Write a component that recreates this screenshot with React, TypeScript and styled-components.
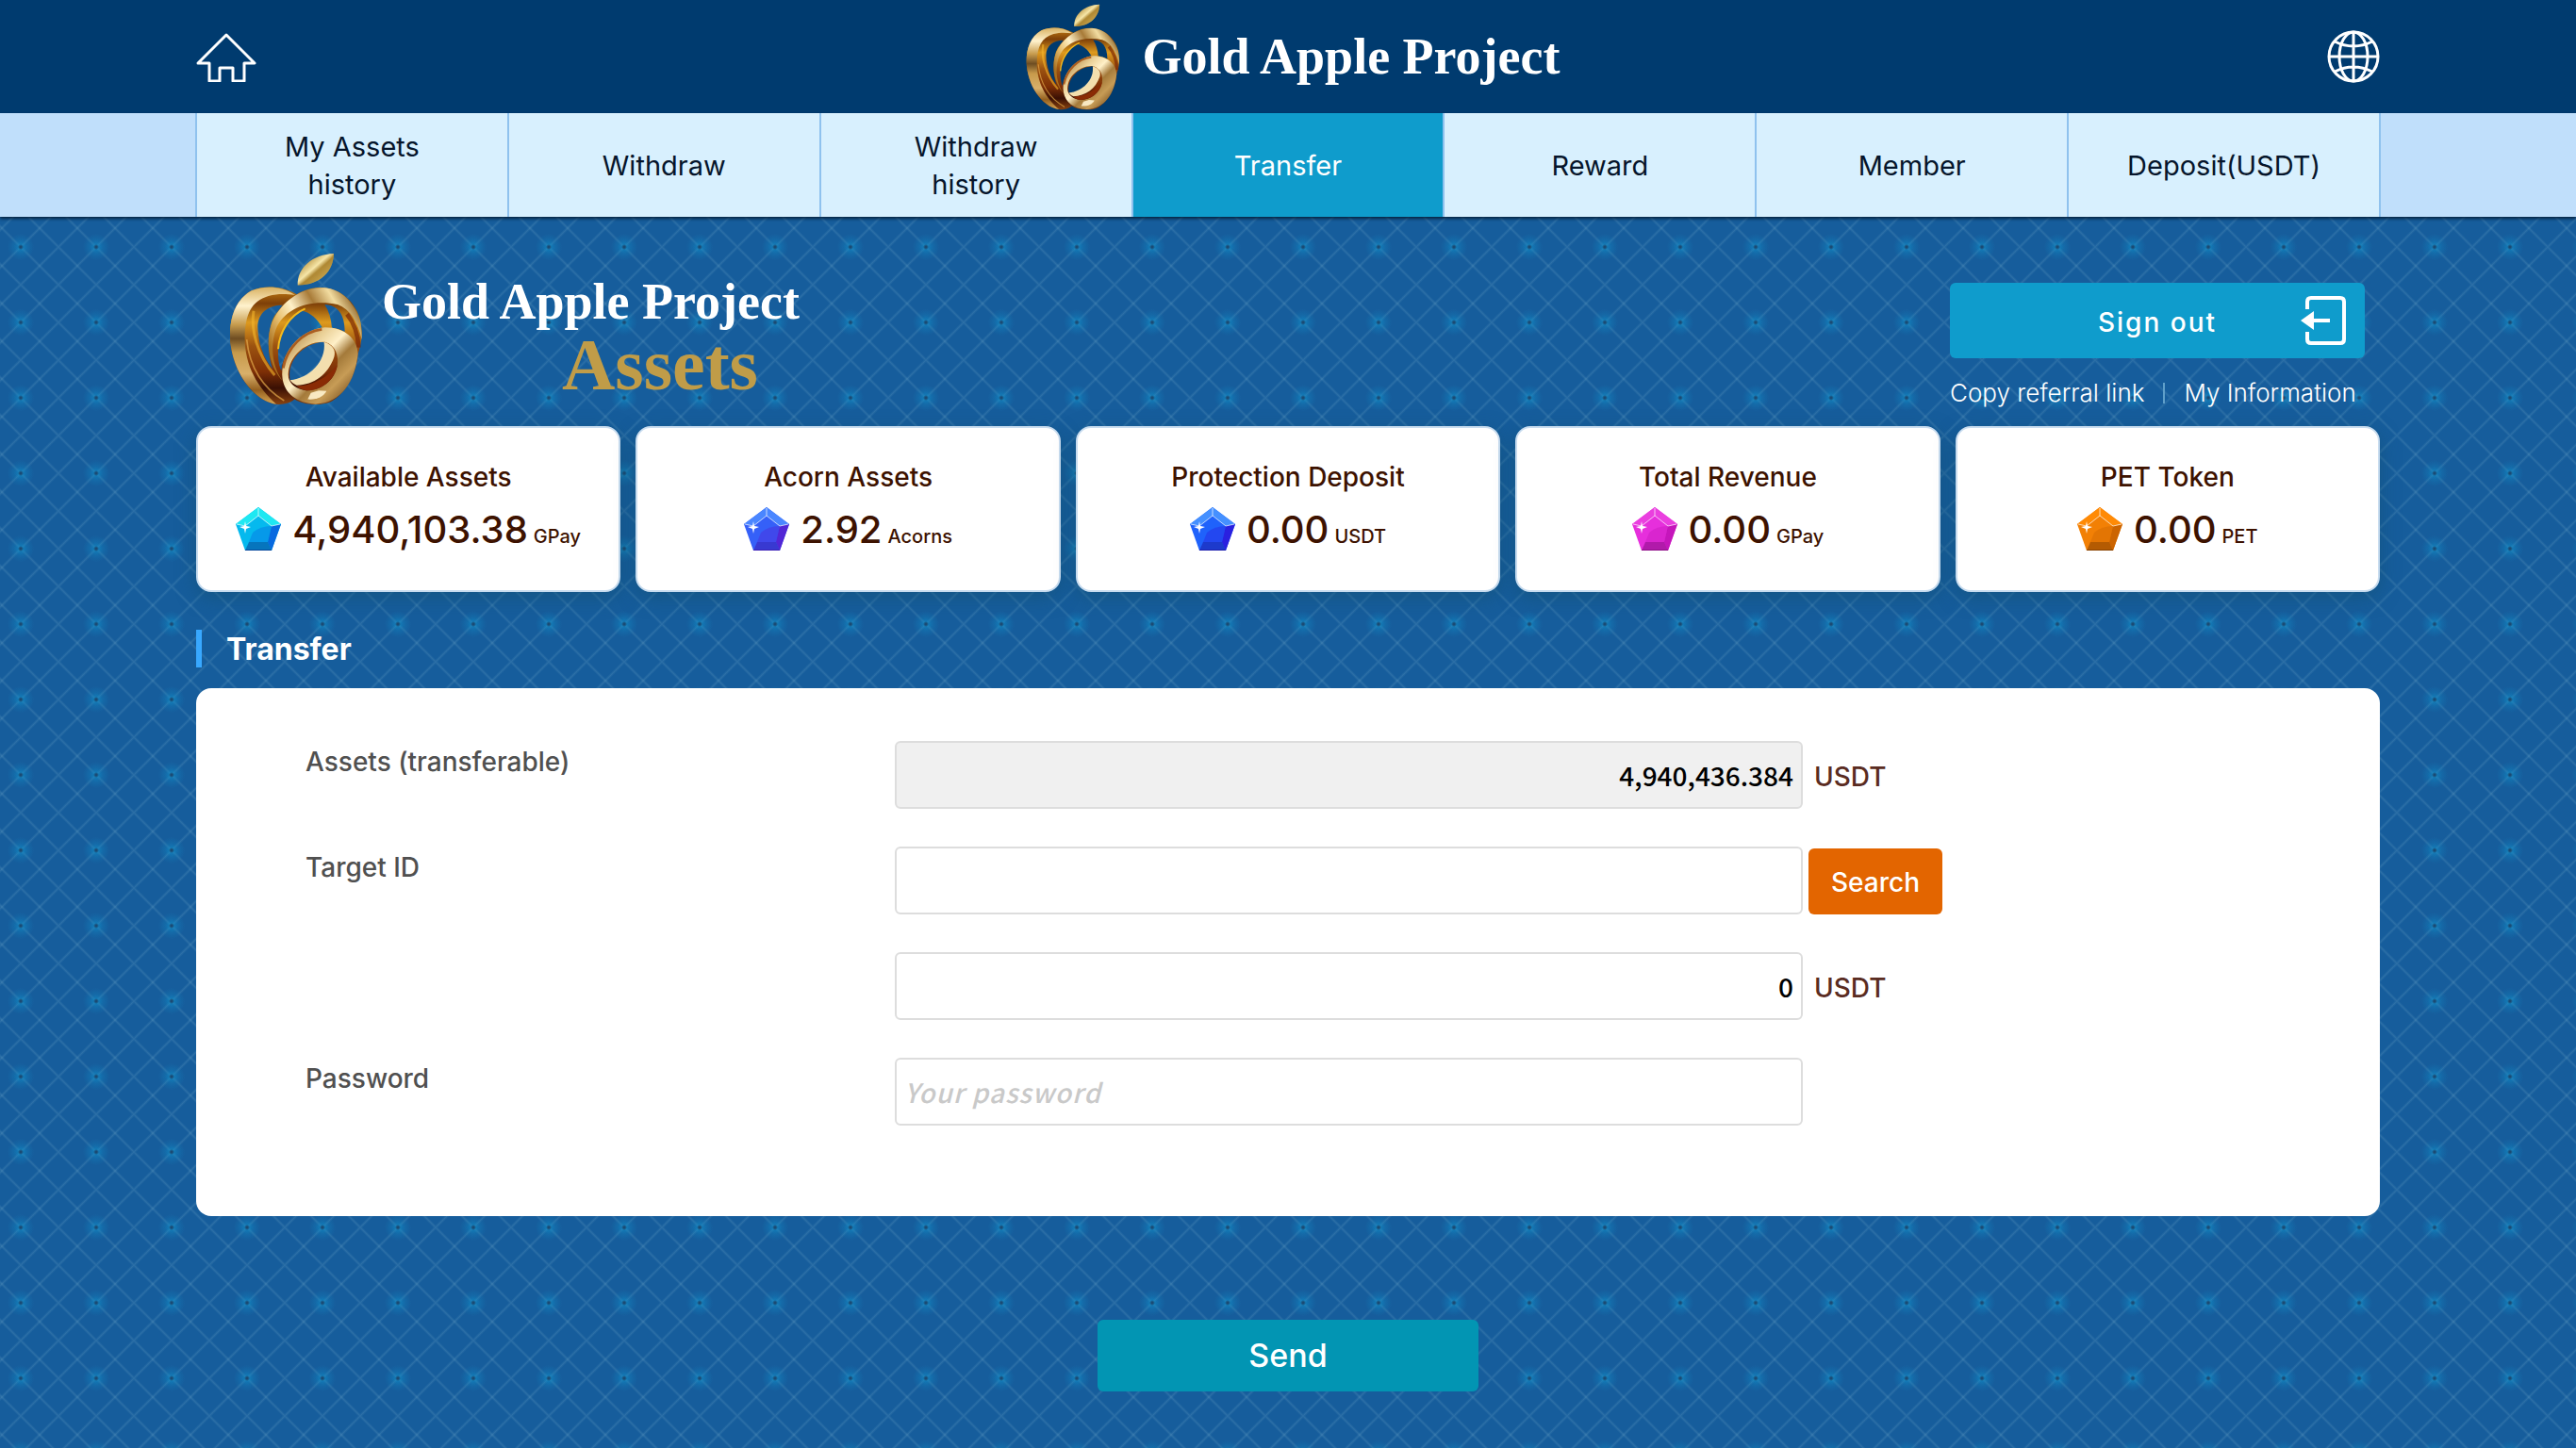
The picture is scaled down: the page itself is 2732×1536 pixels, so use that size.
import React, { useState } from 'react';
import styled, { createGlobalStyle } from 'styled-components';

const sans = `Inter, "Noto Sans", "Liberation Sans", sans-serif`;
const fieldFont = `"Noto Sans CJK KR", "Noto Sans", sans-serif`;
const serif = `"Liberation Serif", "Times New Roman", serif`;

const GlobalStyle = createGlobalStyle`
  *, *::before, *::after { box-sizing: border-box; }
  body { margin: 0; font-family: ${sans}; font-size: 28px; line-height: 40px; }
  button, input { font: inherit; }
  a { color: inherit; text-decoration: none; }
  h1, h2, h3, p, ul { margin: 0; padding: 0; }
`;

const Page = styled.div`
  min-height: 100vh;
  background-color: #165d9c;
  background-image:
    radial-gradient(circle, #1b4a73 1px, rgba(27, 74, 115, 0) 3px),
    radial-gradient(circle, rgba(16, 146, 204, 0.7), rgba(16, 146, 204, 0.25) 7px, rgba(16, 146, 204, 0) 14px),
    linear-gradient(45deg, transparent calc(50% - 2px), rgba(150, 200, 220, 0.16) 50%, transparent calc(50% + 2px)),
    linear-gradient(135deg, transparent calc(50% - 2px), rgba(150, 200, 220, 0.16) 50%, transparent calc(50% + 2px));
  background-size: 80px 80px, 80px 80px, 40px 40px, 40px 40px;
  background-position: 62px 62px, 62px 62px, 22px 22px, 22px 22px;
`;

const Header = styled.header`
  height: 120px;
  padding: 0 208px;
  background: #003b6f;
  display: grid;
  grid-template-columns: 1fr auto 1fr;
  align-items: center;
`;

const IconButton = styled.button<{ $end?: boolean }>`
  display: flex;
  justify-self: ${(p) => (p.$end ? 'end' : 'start')};
  padding: 0;
  border: 0;
  background: none;
  color: #fff;
  cursor: pointer;
`;

const Brand = styled.a`
  display: flex;
  align-items: center;
  gap: 24px;
  padding-left: 10px;
`;

const BrandName = styled.span`
  font: bold 54px/64px ${serif};
  color: #fff;
`;

const NavBar = styled.nav`
  position: relative;
  padding: 0 207px;
  background: #c0dffb;
  box-shadow: 0 2px 3px rgba(0, 20, 40, 0.8);
`;

const Tabs = styled.ul`
  display: grid;
  grid-template-columns: repeat(7, minmax(0, 1fr));
  list-style: none;
  border-left: 2px solid #8fc2ee;
`;

const TabLink = styled.a<{ $active?: boolean }>`
  height: 110px;
  padding: 2px 56px 0;
  display: flex;
  align-items: center;
  justify-content: center;
  text-align: center;
  font-size: 29px;
  border-right: 2px solid #8fc2ee;
  background: ${(p) => (p.$active ? '#0f9ccc' : '#d8f0fe')};
  color: ${(p) => (p.$active ? '#fff' : '#06152b')};
`;

const Main = styled.main`
  padding: 36px 208px 60px;
`;

const Intro = styled.div`
  display: flex;
  justify-content: space-between;
  align-items: flex-start;
  padding: 0 16px 0 35px;
  height: 186px;
`;

const AssetsBrand = styled.h1`
  display: flex;
  gap: 20px;
  padding-top: 2px;
  font-weight: bold;
`;

const AssetsText = styled.span`
  display: flex;
  flex-direction: column;
  padding-top: 20px;
`;

const AssetsWord = styled.span`
  font: bold 78px/70px ${serif};
  color: #c09c48;
  align-self: flex-end;
  padding-right: 44px;
`;

const Account = styled.div`
  width: 440px;
  padding-top: 34px;
`;

const SignOut = styled.button`
  width: 100%;
  height: 80px;
  padding: 0 20px;
  display: grid;
  grid-template-columns: 48px 1fr 48px;
  align-items: center;
  border: 0;
  border-radius: 6px;
  background: #0f9ccc;
  color: #fff;
  font-weight: 500;
  letter-spacing: 2px;
  cursor: pointer;
  span { grid-column: 2; padding-top: 4px; }
`;

const AccountLinks = styled.div`
  display: flex;
  align-items: center;
  padding-top: 18px;
  font-size: 26px;
  line-height: 38px;
  font-weight: 300;
  color: #fff;
  white-space: nowrap;
`;

const Divider = styled.span`
  width: 2px;
  height: 22px;
  margin: 0 20px;
  background: #5f9fca;
`;

const Cards = styled.section`
  display: grid;
  grid-template-columns: repeat(5, 1fr);
  gap: 16px;
`;

const Card = styled.article`
  height: 176px;
  padding-top: 32px;
  border: 2px solid #c8dcef;
  border-radius: 16px;
  background: #fff;
  box-shadow: 0 6px 20px rgba(20, 80, 110, 0.5);
  color: #3d1200;
  text-align: center;
`;

const CardTitle = styled.h3`
  font-size: 28px;
  line-height: 40px;
  font-weight: 500;
`;

const Amount = styled.p`
  display: flex;
  justify-content: center;
  align-items: baseline;
  font-size: 40px;
  line-height: 56px;
  font-weight: 500;
  padding-top: 8px;
  svg { align-self: flex-start; margin: 4px 12px 0 0; }
  small { font-size: 20px; margin-left: 6px; }
`;

const SectionTitle = styled.h2`
  margin: 40px 0 22px;
  padding: 2px 0 0 26px;
  border-left: 6px solid #38a8ff;
  font-size: 32px;
  line-height: 38px;
  font-weight: 700;
  color: #fff;
`;

const Panel = styled.div`
  padding: 56px 116px 96px;
  border-radius: 16px;
  background: #fff;
  display: grid;
  gap: 40px;
`;

const Row = styled.div`
  display: grid;
  grid-template-columns: 30% 1fr;
`;

const Label = styled.label`
  padding-top: 2px;
  color: #505050;
  font-weight: 500;
`;

const Controls = styled.div`
  display: flex;
  align-items: center;
  gap: 6px;
`;

const Field = styled.input<{ $right?: boolean }>`
  width: 66%;
  height: 72px;
  padding: 0 8px;
  border: 2px solid #ddd;
  border-radius: 6px;
  background: #fff;
  color: #000;
  font-family: ${fieldFont};
  font-weight: 500;
  text-align: ${(p) => (p.$right ? 'right' : 'left')};
  &:read-only { background: #f0f0f0; }
  &::placeholder { color: #c9c9c9; font-style: italic; letter-spacing: 1px; opacity: 1; }
`;

const Unit = styled.span`
  padding: 4px 0 0 6px;
  color: #5a2c22;
  font-weight: 500;
`;

const Search = styled.button`
  align-self: flex-end;
  height: 70px;
  padding: 2px 24px 0;
  border: 0;
  border-radius: 6px;
  background: #e36500;
  color: #fff;
  font-weight: 500;
  cursor: pointer;
`;

const Send = styled.button`
  display: block;
  width: 404px;
  height: 76px;
  margin: 110px auto 0;
  border: 0;
  border-radius: 6px;
  background: #0295b3;
  color: #fff;
  font-size: 34px;
  font-weight: 500;
  cursor: pointer;
`;

function Apple({ id, width, height }: { id: string; width: number; height: number }) {
  const ref = (name: string) => `url(#${id}-${name})`;
  return (
    <svg width={width} height={height} viewBox="40 27 426 480" preserveAspectRatio="none" aria-hidden="true">
      <defs>
        <linearGradient id={`${id}-leaf`} x1="0" y1="0" x2="1" y2="1">
          <stop offset="0.2" stopColor="#b8923e" />
          <stop offset="0.45" stopColor="#f6e6a8" />
          <stop offset="0.55" stopColor="#b08a35" />
          <stop offset="0.8" stopColor="#e3c266" />
        </linearGradient>
        <linearGradient id={`${id}-left`} x1="0" y1="0" x2="0" y2="1">
          <stop offset="0" stopColor="#d9b263" />
          <stop offset="0.16" stopColor="#fff2cd" />
          <stop offset="0.32" stopColor="#c79c4e" />
          <stop offset="0.44" stopColor="#6e4d22" />
          <stop offset="0.56" stopColor="#c79a4b" />
          <stop offset="0.74" stopColor="#d9b06a" />
          <stop offset="0.88" stopColor="#94601f" />
          <stop offset="1" stopColor="#d8a552" />
        </linearGradient>
        <linearGradient id={`${id}-right`} x1="0" y1="0.6" x2="1" y2="0">
          <stop offset="0" stopColor="#a8701f" />
          <stop offset="0.2" stopColor="#e8c070" />
          <stop offset="0.36" stopColor="#fff1c8" />
          <stop offset="0.55" stopColor="#a87b38" />
          <stop offset="0.72" stopColor="#f2dca0" />
          <stop offset="0.88" stopColor="#8f6529" />
          <stop offset="1" stopColor="#c99d50" />
        </linearGradient>
        <linearGradient id={`${id}-deep`} x1="0" y1="0" x2="0" y2="1">
          <stop offset="0" stopColor="#c98214" />
          <stop offset="0.14" stopColor="#7d3f08" />
          <stop offset="0.3" stopColor="#dd9a1e" />
          <stop offset="0.5" stopColor="#9c5310" />
          <stop offset="0.72" stopColor="#7e2f06" />
          <stop offset="0.86" stopColor="#3a1004" />
          <stop offset="1" stopColor="#8a4310" />
        </linearGradient>
        <linearGradient id={`${id}-ring`} x1="0" y1="0" x2="1" y2="1">
          <stop offset="0.05" stopColor="#a87430" />
          <stop offset="0.3" stopColor="#e9cf95" />
          <stop offset="0.45" stopColor="#fff0c8" />
          <stop offset="0.58" stopColor="#a47a3a" />
          <stop offset="0.72" stopColor="#c79c56" />
          <stop offset="0.9" stopColor="#7b5220" />
        </linearGradient>
      </defs>
      <path d="M258 129 C256 75 305 32 373 30 C372 85 330 130 258 129Z" fill={ref('leaf')} />
      <path d="M258 129 C300 110 345 75 373 30 C372 85 330 130 258 129Z" fill="#a9822f" opacity="0.4" />
      <path
        fillRule="evenodd"
        fill={ref('deep')}
        d="M255 158 C205 130 150 130 110 147 C60 175 42 230 43 290 C45 390 110 490 190 503 C210 506 235 500 248 488 C275 506 330 510 365 495 C410 470 445 410 450 345 C458 320 463 300 462 275 C460 200 410 145 345 137 C310 135 280 143 255 158Z
        M210 192 C165 192 132 215 131 260 C132 310 150 360 178 392 C160 340 160 270 185 225Z
        M270 209 C235 232 205 270 197 320 C194 350 197 380 206 398 C215 330 265 278 336 262 C320 235 300 215 270 209Z
        M344 190 C385 192 408 220 408 276 C393 268 380 264 367 263 C365 235 357 210 344 190Z
        M234 428 C222 370 275 310 342 308 C352 345 330 395 290 420 C270 430 250 432 234 428Z"
      />
      <path
        fill={ref('left')}
        d="M250 160 C205 130 150 130 110 147 C60 175 42 230 43 290 C45 390 110 490 190 503 C130 450 88 380 90 290 C92 220 110 180 165 163 C200 154 225 158 250 160Z"
      />
      <path d="M96 300 C105 390 150 455 215 492" fill="none" stroke="#e2a84a" strokeWidth="5" opacity="0.7" />
      <path d="M118 210 C108 270 130 350 185 412" fill="none" stroke="#f4b52c" strokeWidth="9" opacity="0.6" />
      <path
        fill={ref('right')}
        d="M212 432 C165 385 150 295 185 230 C220 165 290 132 350 138 C420 148 465 220 462 300 C450 245 425 205 385 190 C300 172 215 200 188 270 C168 330 182 395 212 432Z"
      />
      <path d="M196 330 C200 275 232 225 282 203" fill="none" stroke="#f2b91c" strokeWidth="6" />
      <path d="M415 220 C440 250 450 280 452 325" fill="none" stroke="#7b2605" strokeWidth="14" opacity="0.7" />
      <path
        fillRule="evenodd"
        fill={ref('ring')}
        d="M210 425 C200 345 260 270 345 262 C410 262 448 300 450 345 C440 430 400 500 315 503 C255 500 218 470 210 425Z
        M229 420 C222 360 280 303 345 308 C378 318 390 350 384 385 C375 430 330 462 285 460 C255 456 235 442 229 420Z"
      />
      <path d="M212 390 C225 325 275 275 335 268" fill="none" stroke="#a0480b" strokeWidth="8" opacity="0.8" />
      <path d="M342 308 C372 318 380 335 374 355 C355 410 310 442 255 444 C245 440 238 434 234 428 C295 422 350 370 342 308Z" fill="#f3dfae" />
      <path d="M384 380 C375 430 330 462 285 460 C270 457 260 452 255 446 C315 445 360 410 384 380Z" fill="#8a2b05" />
      <path d="M290 488 C320 490 340 480 350 462 L325 460 300 468Z" fill="#fff3cf" opacity="0.9" />
    </svg>
  );
}

type GemTone = { light: string; mid: string; deep: string; dark: string };

function Gem({ light, mid, deep, dark }: GemTone) {
  return (
    <svg width="48" height="46" viewBox="0 0 48 46" aria-hidden="true">
      <path d="M24 0 48 18 38 46H10L0 18Z" fill={mid} />
      <path d="M24 0 48 18 38 20 24 9 10 20 0 18Z" fill={light} />
      <path d="M48 18 38 46 34 37 38 20Z" fill={deep} />
      <path d="M18 27 Q26 20 38 20 L34 37H14Z" fill={deep} opacity="0.4" />
      <path d="M14 37H34L38 46H10Z" fill={dark} opacity="0.6" />
      <path d="M10 45.500H38" stroke={dark} strokeWidth="1" />
      <path d="M1 18 10 20 24 9 38 20 47 18M24 1V9" fill="none" stroke="#fff" strokeOpacity="0.7" strokeWidth="1" />
      <path d="M10 15 11 20 16 21 11 23 10 28 9 23 4 21 9 20Z" fill="#fff" />
    </svg>
  );
}

function HomeIcon() {
  return (
    <svg width="64" height="54" viewBox="0 0 64 54" fill="none" stroke="#fff" strokeWidth="3" strokeLinejoin="round" aria-hidden="true">
      <path d="M32 4 62 34H51V53H39V39H25V53H14V34H2Z" />
    </svg>
  );
}

function GlobeIcon() {
  return (
    <svg width="56" height="56" viewBox="0 0 56 56" fill="none" stroke="#fff" strokeWidth="3" aria-hidden="true">
      <circle cx="28" cy="28" r="26" />
      <ellipse cx="28" cy="28" rx="15" ry="26" />
      <path d="M28 2V54M2 28H54M8 12Q28 22 48 12M8 44Q28 34 48 44" />
    </svg>
  );
}

function ExitIcon() {
  return (
    <svg width="48" height="52" viewBox="0 0 48 52" fill="none" stroke="#fff" strokeWidth="4" aria-hidden="true">
      <path d="M7 14V6Q7 2 11 2H42Q46 2 46 6V46Q46 50 42 50H11Q7 50 7 46V38" />
      <path d="M11 26H31" />
      <path d="M0 26 14 16V36Z" fill="#fff" stroke="none" />
    </svg>
  );
}

const tabs = ['My Assets history', 'Withdraw', 'Withdraw history', 'Transfer', 'Reward', 'Member', 'Deposit(USDT)'];

const cards: { title: string; value: string; unit: string; tone: GemTone }[] = [
  { title: 'Available Assets', value: '4,940,103.38', unit: 'GPay', tone: { light: '#1fe8f2', mid: '#05b9ee', deep: '#0869e0', dark: '#06489c' } },
  { title: 'Acorn Assets', value: '2.92', unit: 'Acorns', tone: { light: '#4a86ff', mid: '#3560f8', deep: '#5226d6', dark: '#3a1fb8' } },
  { title: 'Protection Deposit', value: '0.00', unit: 'USDT', tone: { light: '#4590ff', mid: '#1f62fb', deep: '#2a20e0', dark: '#1d1fae' } },
  { title: 'Total Revenue', value: '0.00', unit: 'GPay', tone: { light: '#ea3fdf', mid: '#e62fdc', deep: '#c516bb', dark: '#8e0d88' } },
  { title: 'PET Token', value: '0.00', unit: 'PET', tone: { light: '#ff8a05', mid: '#f28005', deep: '#cc6400', dark: '#8a4200' } },
];

export default function App() {
  const [target, setTarget] = useState('');
  const [amount, setAmount] = useState('0');
  const [password, setPassword] = useState('');

  return (
    <Page>
      <GlobalStyle />
      <Header>
        <IconButton aria-label="Home"><HomeIcon /></IconButton>
        <Brand href="#">
          <Apple id="top" width={100} height={113} />
          <BrandName>Gold Apple Project</BrandName>
        </Brand>
        <IconButton $end aria-label="Language"><GlobeIcon /></IconButton>
      </Header>

      <NavBar>
        <Tabs>
          {tabs.map((tab) => (
            <li key={tab}>
              <TabLink href="#" $active={tab === 'Transfer'}>{tab}</TabLink>
            </li>
          ))}
        </Tabs>
      </NavBar>

      <Main>
        <Intro>
          <AssetsBrand>
            <Apple id="main" width={142} height={162} />
            <AssetsText>
              <BrandName>Gold Apple Project</BrandName>
              <AssetsWord>Assets</AssetsWord>
            </AssetsText>
          </AssetsBrand>
          <Account>
            <SignOut><span>Sign out</span><ExitIcon /></SignOut>
            <AccountLinks>
              <a href="#">Copy referral link</a>
              <Divider />
              <a href="#">My Information</a>
            </AccountLinks>
          </Account>
        </Intro>

        <Cards>
          {cards.map((card) => (
            <Card key={card.title}>
              <CardTitle>{card.title}</CardTitle>
              <Amount>
                <Gem {...card.tone} />
                {card.value}
                <small>{card.unit}</small>
              </Amount>
            </Card>
          ))}
        </Cards>

        <SectionTitle>Transfer</SectionTitle>
        <form onSubmit={(e) => e.preventDefault()}>
          <Panel>
            <Row>
              <Label htmlFor="assets">Assets (transferable)</Label>
              <Controls>
                <Field id="assets" $right readOnly value="4,940,436.384" />
                <Unit>USDT</Unit>
              </Controls>
            </Row>
            <Row>
              <Label htmlFor="target">Target ID</Label>
              <Controls>
                <Field id="target" value={target} onChange={(e) => setTarget(e.target.value)} />
                <Search type="button">Search</Search>
              </Controls>
            </Row>
            <Row>
              <span />
              <Controls>
                <Field aria-label="Amount" $right value={amount} onChange={(e) => setAmount(e.target.value)} />
                <Unit>USDT</Unit>
              </Controls>
            </Row>
            <Row>
              <Label htmlFor="password">Password</Label>
              <Controls>
                <Field
                  id="password"
                  type="password"
                  placeholder="Your password"
                  value={password}
                  onChange={(e) => setPassword(e.target.value)}
                />
              </Controls>
            </Row>
          </Panel>
          <Send type="submit">Send</Send>
        </form>
      </Main>
    </Page>
  );
}
